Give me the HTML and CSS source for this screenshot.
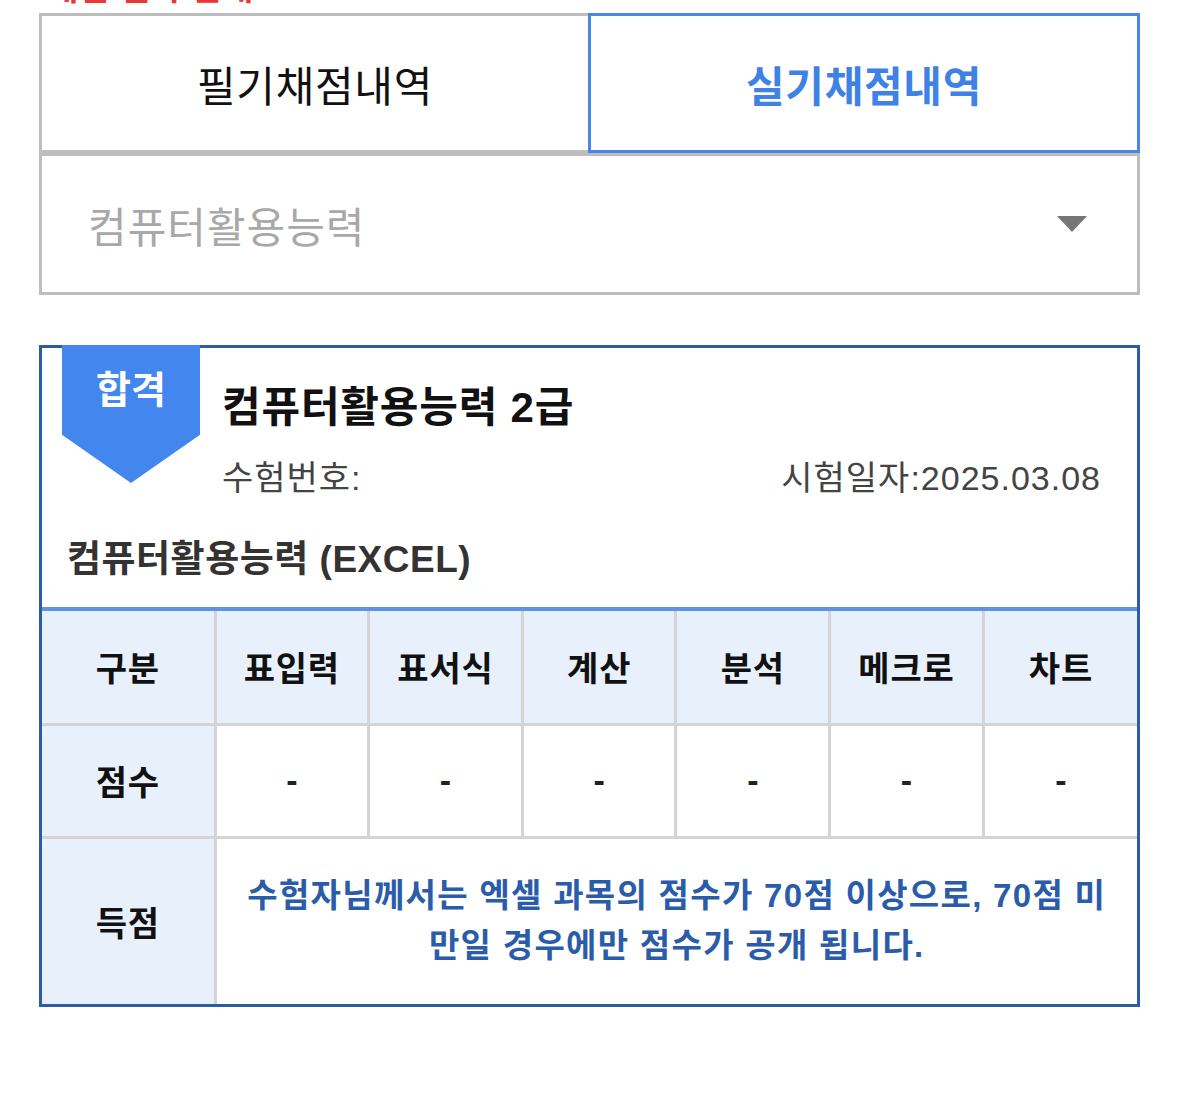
FILE: index.html
```html
<!DOCTYPE html>
<html lang="ko">
<head>
  <meta charset="UTF-8" />
  <meta name="viewport" content="width=device-width, initial-scale=1.0"/>
  <title>채점내역 조회</title>
  <link rel="stylesheet" href="styles.css">
</head>
<body>

  <div class="page">
    <div class="notice-cut"><p>채점 결과 안내</p></div>

    <div class="tabs">
      <a href="#" class="tab">필기채점내역</a>
      <a href="#" class="tab active">실기채점내역</a>
    </div>

    <div class="select">
      <span>컴퓨터활용능력</span>
      <i class="caret"></i>
    </div>

    <div class="card">
      <div class="badge">합격</div>

      <div class="card-head">
        <h3>컴퓨터활용능력 2급</h3>
        <div class="meta">
          <span>수험번호:</span>
          <span>시험일자:2025.03.08</span>
        </div>
      </div>

      <h4 class="subject">컴퓨터활용능력 (EXCEL)</h4>

      <table class="scores">
        <colgroup>
          <col class="col-label">
          <col><col><col><col><col><col>
        </colgroup>
        <tr class="row-head">
          <th>구분</th>
          <th>표입력</th>
          <th>표서식</th>
          <th>계산</th>
          <th>분석</th>
          <th>메크로</th>
          <th>차트</th>
        </tr>
        <tr class="row-score">
          <th>점수</th>
          <td>-</td>
          <td>-</td>
          <td>-</td>
          <td>-</td>
          <td>-</td>
          <td>-</td>
        </tr>
        <tr class="row-total">
          <th>득점</th>
          <td colspan="6" class="message">수험자님께서는 엑셀 과목의 점수가 70점 이상으로, 70점 미<br>만일 경우에만 점수가 공개 됩니다.</td>
        </tr>
      </table>
    </div>
  </div>

</body>
</html>
```

FILE: styles.css
```css
body {
  margin: 0;
  background: #fff;
  font-family: 'Liberation Sans', 'Noto Sans CJK KR', sans-serif;
  color: #111;
}
.page {
  width: 1101px;
  margin-left: 39px;
}
.notice-cut {
  height: 13px;
  overflow: hidden;
}
.notice-cut p {
  margin: -32px 0 0 8px;
  font-size: 34px;
  line-height: 40px;
  font-weight: bold;
  color: #e53935;
}
.tabs {
  display: flex;
  height: 140px;
}
.tab {
  flex: 1;
  display: flex;
  align-items: center;
  justify-content: center;
  border: 3px solid #bdbdbd;
  font-size: 42px;
  letter-spacing: 0.7px;
  color: #111;
  text-decoration: none;
}
.tab:first-child {
  border-right: none;
}
.tab.active {
  border-color: #4a87e5;
  color: #3f82e6;
  font-weight: 600;
}
.select {
  height: 136px;
  border: 3px solid #bdbdbd;
  display: flex;
  align-items: center;
  justify-content: space-between;
  padding: 0 50px 0 46px;
  font-size: 42px;
  letter-spacing: 1px;
  color: #a8a8a8;
}
.caret {
  width: 0;
  height: 0;
  border-left: 15px solid transparent;
  border-right: 15px solid transparent;
  border-top: 16px solid #777;
}
.card {
  position: relative;
  margin-top: 50px;
  border: 3px solid #2d5ca6;
}
.badge {
  position: absolute;
  left: 20px;
  top: -3px;
  width: 138px;
  height: 117px;
  padding-top: 21px;
  background: #4387ee;
  clip-path: polygon(0 0, 100% 0, 100% 65%, 50% 100%, 0 65%);
  color: #fff;
  font-size: 38px;
  line-height: 48px;
  font-weight: bold;
  text-align: center;
}
.card-head {
  padding: 32px 36px 0 180px;
}
.card-head h3 {
  margin: 0;
  font-size: 42px;
  line-height: 56px;
  letter-spacing: 0.8px;
  color: #111;
}
.meta {
  margin-top: 17px;
  display: flex;
  justify-content: space-between;
  font-size: 34px;
  line-height: 50px;
  letter-spacing: 1px;
  color: #444;
}
.subject {
  margin: 32px 0 0;
  padding: 0 0 22px 25px;
  font-size: 37px;
  line-height: 50px;
  letter-spacing: 0.5px;
  color: #333;
  border-bottom: 4px solid #5b93e8;
}
.scores {
  width: 100%;
  border-collapse: collapse;
  border-style: hidden;
  table-layout: fixed;
}
.col-label {
  width: 173px;
}
.scores th, .scores td {
  border: 3px solid #d4d4d4;
  text-align: center;
  padding: 0;
}
.scores th {
  background: #e8f1fb;
  font-size: 34px;
  letter-spacing: 0.8px;
  font-weight: bold;
  color: #111;
}
.row-head {
  height: 113px;
}
.row-score {
  height: 113px;
}
.row-score td {
  font-size: 34px;
  font-weight: bold;
  color: #222;
}
.row-total {
  height: 167px;
}
.message {
  padding: 0 10px !important;
  font-size: 33px;
  line-height: 50px;
  letter-spacing: 1.3px;
  font-weight: bold;
  color: #2b5ca9;
}
```
